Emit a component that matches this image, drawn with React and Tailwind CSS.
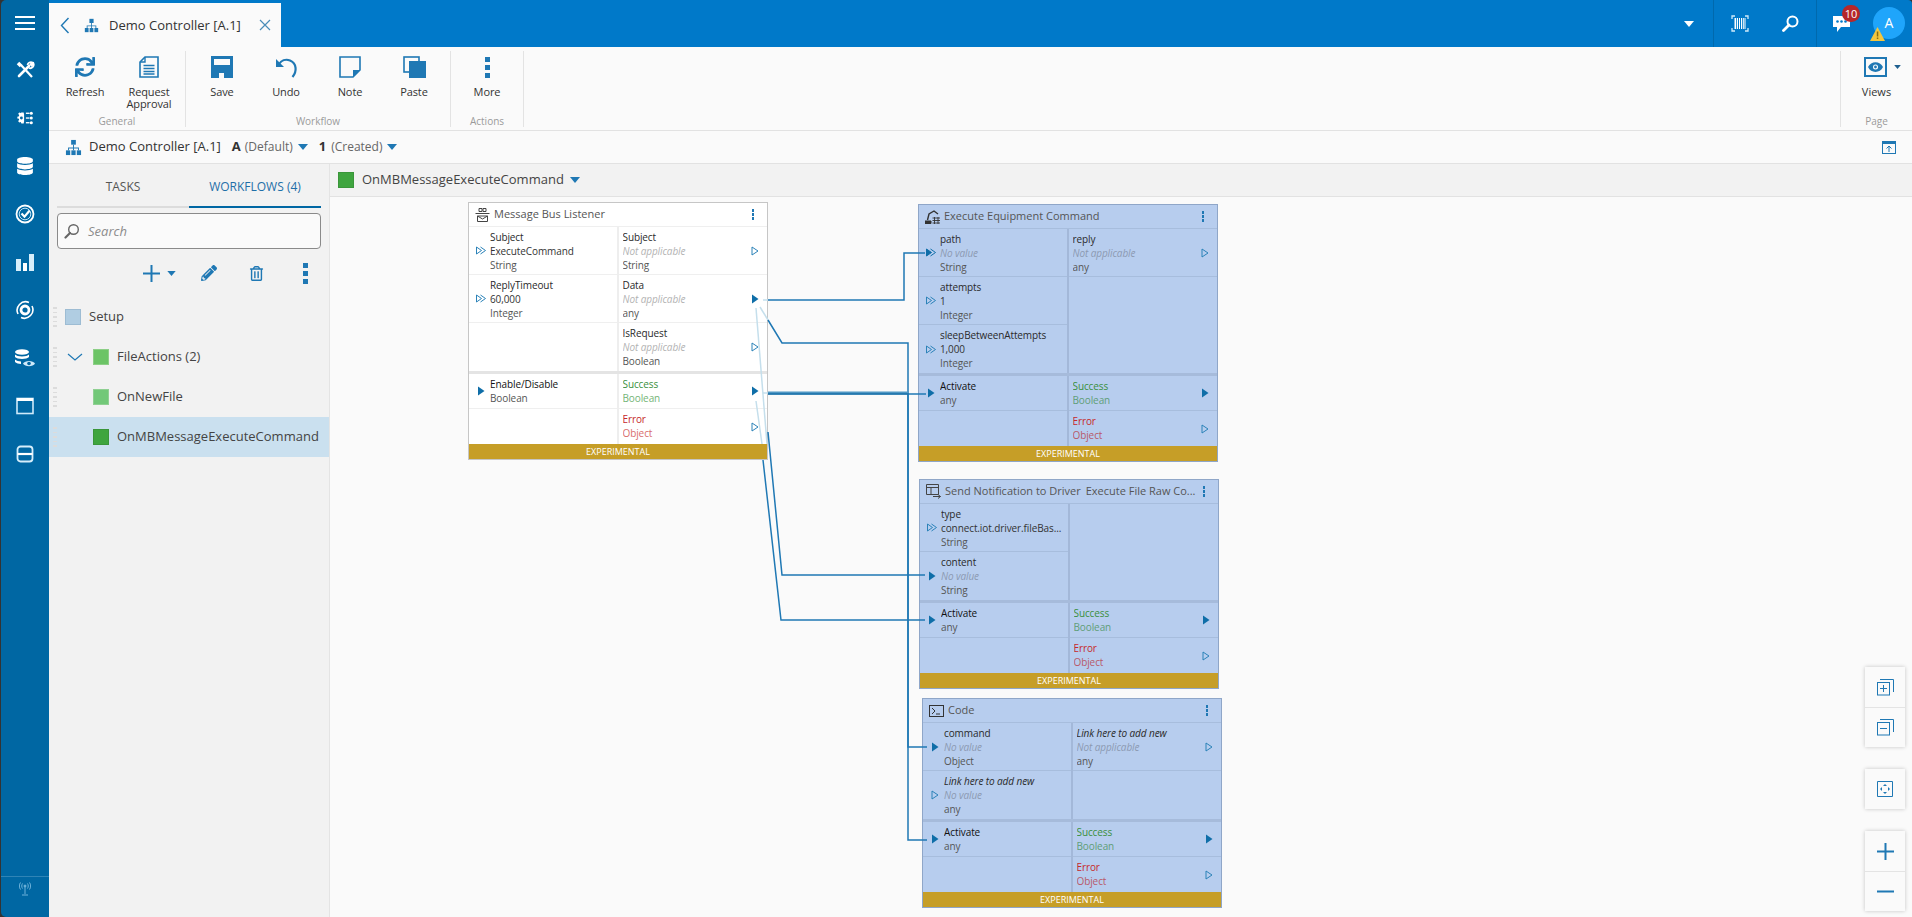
import React from "react";
import { FaSync, FaDatabase, FaPencilAlt, FaRegTrashAlt } from "react-icons/fa";

const Org = ({ c = "#1f78b4", s = 18 }) => (
  <svg width={s} height={s} viewBox="0 0 18 18" fill={c}>
    <rect x="6.5" y="1" width="5" height="5" />
    <rect x="1" y="12" width="4.5" height="5" />
    <rect x="6.75" y="12" width="4.5" height="5" />
    <rect x="12.5" y="12" width="4.5" height="5" />
    <path d="M8.5 6h1v3h5.250v3h-1v-2h-4.250v2h-1v-2h-4.250v2h-1v-3h5.250z" />
  </svg>
);
const Caret = ({ c = "#1f78b4", w = 11, h = 6 }) => (
  <svg width={w} height={h} viewBox="0 0 10 6" fill={c}><path d="M0 0h10L5 6z" /></svg>
);
const Kebab = ({ s = 4, g = 3, c = "#1f78b4" }) => (
  <div className="flex flex-col" style={{ gap: g }}>
    {[0, 1, 2].map((i) => <div key={i} style={{ width: s, height: s, background: c }} />)}
  </div>
);

const railIcons = [
  <svg key="a" width="20" height="20" viewBox="0 0 20 20" fill="none" stroke="#fff" strokeWidth="2.200"><path d="M6 5 17 17" /><path d="M3 3 6 6" strokeWidth="3.500" /><path d="M4 16 14 6" strokeWidth="2.600" strokeLinecap="round" /><path d="M12.500 5a3.500 3.500 0 0 1 5-2.500l-2 2 1 1 2-2a3.500 3.500 0 0 1-4.500 4.500" strokeWidth="1.800" /></svg>,
  <svg key="b" width="18" height="18" viewBox="0 0 20 20" fill="#fff"><path d="M6 4h2.500l.5 2v8l-.5 2H6l-.7-1.600-1.600.6-1.300-1.500 1-1.500v-1.300L1.500 10.500v-2L3.400 8V6.800L2.400 5.300 3.700 3.800l1.600.6z" /><circle cx="6" cy="10" r="1.600" fill="#0067a3" /><rect x="11" y="4" width="4" height="1.500" /><rect x="11" y="9.300" width="4" height="1.500" /><rect x="11" y="14.500" width="4" height="1.500" /><circle cx="17" cy="4.700" r="1.700" /><circle cx="17" cy="10" r="1.700" /><circle cx="17" cy="15.300" r="1.700" /></svg>,
  <FaDatabase key="c" size={18} color="#fff" />,
  <svg key="d" width="20" height="20" viewBox="0 0 20 20" fill="none" stroke="#fff"><circle cx="10" cy="10" r="8.500" strokeWidth="1.800" /><circle cx="10" cy="10" r="5.800" strokeWidth="1" stroke="#bfe3f7" /><path d="m6.500 9.500 3 3.200 5-6" strokeWidth="2.200" /></svg>,
  <svg key="e" width="20" height="20" viewBox="0 0 20 20" fill="#fff"><rect x="1" y="7" width="5" height="12" fill="#d6eefb" /><rect x="8" y="11" width="4" height="8" /><rect x="14" y="2" width="5" height="17" fill="#d6eefb" /></svg>,
  <svg key="f" width="20" height="20" viewBox="0 0 20 20" fill="none" stroke="#fff"><path d="M3 14A8.500 8.500 0 0 1 14 2.500M17 6a8.500 8.500 0 0 1-11 11.500" strokeWidth="1.600" /><circle cx="10" cy="10" r="4" strokeWidth="2.800" /></svg>,
  <svg key="g" width="22" height="20" viewBox="0 0 22 20" fill="#fff"><ellipse cx="8" cy="4" rx="7" ry="2.800" /><path d="M1 6.500c2 2.500 12 2.500 14 0V9c-2 2.500-12 2.500-14 0z" /><path d="M1 11.500c1 1.200 4 2 6 2v2.500c-2 0-5-.8-6-2z" /><path d="M9 15.500c2-3.500 10-3.500 12 0-2 3.500-10 3.500-12 0z" fill="#cfeafa" /><circle cx="15" cy="15.500" r="1.800" fill="#0067a3" /></svg>,
  <svg key="h" width="20" height="20" viewBox="0 0 20 20" fill="none"><rect x="2" y="2.500" width="16" height="15" stroke="#cfeafa" strokeWidth="1.600" /><rect x="2" y="2" width="16" height="3" fill="#fff" /></svg>,
  <svg key="i" width="20" height="20" viewBox="0 0 20 20" fill="none" stroke="#d6eefb" strokeWidth="1.800"><rect x="2.500" y="2.500" width="15" height="15" rx="3" /><path d="M2.500 10h15" strokeWidth="2.200" stroke="#fff" /></svg>,
];

function Rail() {
  return (
    <div className="w-[48px] shrink-0 bg-[#0067a3] rounded-tl-[5px] rounded-bl-[5px] flex flex-col h-full">
      <div className="h-[46px] flex flex-col items-center justify-center gap-[4px]">
        <div className="w-[20px] h-[2px] bg-white" />
        <div className="w-[20px] h-[2px] bg-white" />
        <div className="w-[20px] h-[2px] bg-white" />
      </div>
      {railIcons.map((ic, i) => (
        <div key={i} className="h-[48px] flex items-center justify-center">{ic}</div>
      ))}
      <div className="mt-auto h-[41px] border-t border-[#2f84b6] flex justify-center pt-[5px]">
        <svg width="12" height="14" viewBox="0 0 12 14" fill="none" stroke="#6fb3da" strokeWidth="1">
          <path d="M6 4v8M3 13h6" /><circle cx="6" cy="4" r="1" fill="#6fb3da" />
          <path d="M3.500 1.500c-1 1.500-1 3.500 0 5M8.500 1.500c1 1.500 1 3.500 0 5M1.500 .5c-1.500 2-1.500 5 0 7M10.500 .5c1.500 2 1.500 5 0 7" />
        </svg>
      </div>
    </div>
  );
}

function TopBar() {
  return (
    <div className="h-[47px] bg-[#0079c9] flex items-end rounded-tr-[4px] relative">
      <div className="w-[232px] h-[44px] bg-[#fafafa] flex items-center relative">
        <svg className="ml-[11px]" width="10" height="17" viewBox="0 0 10 17" fill="none" stroke="#1f78b4" strokeWidth="1.400"><path d="M8.500 1 1.500 8.500l7 7.500" /></svg>
        <div className="ml-[14px]"><Org s={15} /></div>
        <span className="ml-[10px] text-[13px] text-[#333] leading-none whitespace-nowrap">Demo Controller [A.1]</span>
        <svg className="ml-[18px]" width="12" height="12" viewBox="0 0 12 12" fill="none" stroke="#4a8db8" strokeWidth="1.200"><path d="m1 1 10 10M11 1 1 11" /></svg>
      </div>
      <div className="ml-auto h-[47px] flex items-center">
        <div className="pr-[19px]"><Caret c="#fff" w={10} h={6} /></div>
        <div className="w-[52px] h-[47px] border-l border-[#0069ad] flex items-center justify-center pl-[1px]">
          <svg width="18" height="17" viewBox="0 0 18 17" fill="none">
            <path d="M1 4V1h3M14 1h3v3M17 13v3h-3M4 16H1v-3" stroke="#cfeafa" strokeWidth="1.300" />
            <path d="M3.500 3H5v11H3.500zM5.800 3h1.200v11H5.800zM8 3h1v11H8zM10 3h1.200v11H10zM12 3h.800v11H12zM13.500 3h1v11h-1z" fill="#fff" />
          </svg>
        </div>
        <div className="w-[51px] h-[47px] flex items-center justify-center">
          <svg width="17" height="17" viewBox="0 0 17 17" fill="none" stroke="#fff"><circle cx="10.500" cy="6.500" r="5" strokeWidth="2" /><path d="M7 10 1.500 15.500" strokeWidth="2.800" strokeLinecap="round" /></svg>
        </div>
        <div className="w-[96px] h-[47px] border-l border-[#0069ad] relative">
          <svg className="absolute left-[16px] top-[15px]" width="18" height="18" viewBox="0 0 18 18"><path d="M0 1h17v11H8l-4 5v-5H0z" fill="#fff" /><circle cx="4.500" cy="6.500" r="1.300" fill="#0079c9" /><circle cx="8.500" cy="6.500" r="1.300" fill="#0079c9" /><circle cx="12.500" cy="6.500" r="1.300" fill="#0079c9" /></svg>
          <div className="absolute left-[25px] top-[5px] w-[18px] h-[17px] rounded-full bg-[#b5272a] text-white text-[11px] leading-[17px] text-center">10</div>
          <div className="absolute left-[56px] top-[7px] w-[32px] h-[32px] rounded-full bg-[#1fa5fb] text-white text-[14px] leading-[32px] text-center">A</div>
          <svg className="absolute left-[53px] top-[27px]" width="15" height="14" viewBox="0 0 15 14"><path d="M7.500 0 15 14H0z" fill="#f3c63f" /><rect x="6.800" y="4.500" width="1.500" height="5" fill="#8a6d12" /><rect x="6.800" y="10.500" width="1.500" height="1.500" fill="#8a6d12" /></svg>
        </div>
      </div>
    </div>
  );
}

const rIcons = {
  refresh: <FaSync size={20} color="#1f78b4" />,
  doc: (
    <svg width="20" height="22" viewBox="0 0 20 22" fill="none" stroke="#1f78b4"><path d="M6 1h13v20H1V6z" strokeWidth="1.600" /><path d="M6 1v5H1" strokeWidth="1.400" /><path d="M4.500 9.500h11M4.500 12.500h11M4.500 15.500h11M4.500 18h11" strokeWidth="1.500" /></svg>
  ),
  save: (
    <svg width="22" height="22" viewBox="0 0 22 22"><path d="M0 0h22v22H0z" fill="#1f78b4" /><rect x="3" y="3" width="16" height="6" fill="#fafafa" /><rect x="8" y="17" width="5" height="5" fill="#fafafa" /></svg>
  ),
  undo: (
    <svg width="23" height="21" viewBox="0 0 23 21" fill="none" stroke="#1f78b4"><path d="M3 8.500C6 3 11 2 15 3.500c7 3 7 11 2.500 16.500" strokeWidth="2.200" /><path d="M1 2v8h8z" fill="#1f78b4" stroke="none" /></svg>
  ),
  note: (
    <svg width="22" height="22" viewBox="0 0 22 22" fill="none" stroke="#1f78b4"><path d="M1 1h20v13l-7 7H1z" strokeWidth="1.600" /><path d="M21 14h-7v7z" fill="#1f78b4" stroke="none" /></svg>
  ),
  paste: (
    <svg width="23" height="22" viewBox="0 0 23 22" fill="none"><rect x="1" y="1" width="15" height="15" stroke="#1f78b4" strokeWidth="1.600" /><rect x="6" y="5" width="17" height="17" fill="#1f78b4" /></svg>
  ),
  more: <Kebab s={5} g={3} />,
};

const RItem = ({ icon, label }) => (
  <div className="w-[64px] flex flex-col items-center">
    <div className="h-[22px] flex items-center justify-center">{rIcons[icon]}</div>
    <div className="mt-[8px] text-[11px] leading-[12px] text-[#333] text-center tracking-[-0.1px]">{label}</div>
  </div>
);
const RGroup = ({ title, items }) => (
  <div className="flex flex-col border-r border-[#e3e3e3] px-[4px] h-[76px]">
    <div className="flex flex-1 pt-[5px]">
      {items.map(([i, l]) => <RItem key={i} icon={i} label={l} />)}
    </div>
    <div className="text-[10px] leading-[12px] text-[#9a9a9a] text-center">{title}</div>
  </div>
);

function Ribbon() {
  return (
    <div className="h-[84px] bg-[#fafafa] border-b border-[#e2e2e2] flex pt-[4px]">
      <RGroup title="General" items={[["refresh", "Refresh"], ["doc", <>Request<br />Approval</>]]} />
      <RGroup title="Workflow" items={[["save", "Save"], ["undo", "Undo"], ["note", "Note"], ["paste", "Paste"]]} />
      <RGroup title="Actions" items={[["more", "More"]]} />
      <div className="ml-auto w-[72px] h-[76px] border-l border-[#e3e3e3] flex flex-col items-center">
        <div className="pt-[5px] h-[27px] flex items-center gap-[7px] pl-[12px]">
          <div className="w-[23px] h-[20px] border-[2.5px] border-[#1f78b4] flex items-center justify-center">
            <svg width="15" height="10" viewBox="0 0 15 10"><path d="M0 5c3-6.500 12-6.500 15 0-3 6.500-12 6.500-15 0z" fill="#1f78b4" /><circle cx="7.500" cy="5" r="2.500" fill="#fff" /><circle cx="7.500" cy="5" r="1.400" fill="#1f78b4" /></svg>
          </div>
          <Caret c="#1f5f8f" w={7} h={4} />
        </div>
        <div className="mt-[8px] text-[11px] leading-[12px] text-[#333]">Views</div>
        <div className="mt-auto text-[10px] leading-[12px] text-[#9a9a9a]">Page</div>
      </div>
    </div>
  );
}

function SubBar() {
  return (
    <div className="h-[33px] bg-[#fafafa] border-b border-[#e2e2e2] flex items-center pl-[16px] text-[13px] text-[#333] whitespace-nowrap">
      <Org s={17} />
      <span className="ml-[7px]">Demo Controller [A.1]</span>
      <span className="ml-[11px] font-bold">A</span>
      <span className="ml-[4px] text-[12px] text-[#666]">(Default)</span>
      <span className="ml-[5px]"><Caret w={10} h={6} /></span>
      <span className="ml-[11px] font-bold">1</span>
      <span className="ml-[5px] text-[12px] text-[#666]">(Created)</span>
      <span className="ml-[5px]"><Caret w={10} h={6} /></span>
      <div className="ml-auto mr-[16px]">
        <svg width="14" height="13" viewBox="0 0 14 13" fill="none"><rect x=".5" y=".5" width="13" height="12" stroke="#1f78b4" /><rect x="0" y="0" width="14" height="3" fill="#1f78b4" /><path d="M7 11V5M4.500 7.500 7 5l2.500 2.500" stroke="#1f78b4" /></svg>
      </div>
    </div>
  );
}

const Drag = () => (
  <div className="flex flex-col gap-[3px] w-[4px] mr-[4px]">
    {[0, 1, 2, 3, 4].map((i) => <div key={i} className="h-[1.500px] w-[4px] bg-[#dcdcdc]" />)}
  </div>
);

const Tree = ({ color, border, label, indent, chevron, selected }) => (
  <div className={`h-[40px] flex items-center pl-[4px] ${selected ? "bg-[#cae0ef]" : ""}`}>
    <Drag />
    {chevron && (
      <svg className="ml-[6px]" width="16" height="8" viewBox="0 0 16 8" fill="none" stroke="#1f78b4" strokeWidth="1.200"><path d="m1 1 7 6 7-6" /></svg>
    )}
    <div
      className={`w-[16px] h-[16px] shrink-0 border ${indent ? (chevron ? "ml-[10px]" : "ml-[32px]") : "ml-[4px]"}`}
      style={{ background: color, borderColor: border }}
    />
    <span className="ml-[8px] text-[13px] text-[#444] whitespace-nowrap">{label}</span>
  </div>
);

function LeftPanel() {
  return (
    <div className="w-[281px] shrink-0 bg-[#f2f2f2] border-r border-[#e4e4e4] flex flex-col">
      <div className="mx-[8px] h-[44px] flex border-b-0">
        <div className="w-[132px] pt-[3px] border-b-2 border-[#dcdcdc] flex items-center justify-center text-[12px] text-[#555]">TASKS</div>
        <div className="w-[132px] pt-[3px] border-b-2 border-[#0067a3] flex items-center justify-center text-[12px] text-[#1f6fa8] whitespace-nowrap">WORKFLOWS (4)</div>
      </div>
      <div className="mx-[8px] mt-[5px] h-[36px] border border-[#8a8a8a] rounded-[4px] bg-[#fafafa] flex items-center pl-[6px]">
        <svg width="16" height="16" viewBox="0 0 16 16" fill="none" stroke="#666"><circle cx="9.500" cy="6.500" r="4.800" strokeWidth="1.400" /><path d="M6 10 1.500 14.500" strokeWidth="2.200" strokeLinecap="round" /></svg>
        <span className="ml-[8px] pt-[1px] text-[13px] italic text-[#8c8c8c]">Search</span>
      </div>
      <div className="h-[48px] flex items-center relative pl-[94px]">
        <svg width="17" height="17" viewBox="0 0 17 17" fill="#1f78b4"><rect x="7.500" y="0" width="2" height="17" /><rect x="0" y="7.500" width="17" height="2" /></svg>
        <span className="ml-[7px]"><Caret w={9} h={5} /></span>
        <span className="ml-[25px]"><FaPencilAlt size={16} color="#1f78b4" /></span>
        <span className="ml-[32px]"><FaRegTrashAlt size={15} color="#1f78b4" /></span>
        <span className="ml-[39px]"><Kebab s={5} g={3} /></span>
      </div>
      <Tree color="#b0cde2" border="#9dbcd3" label="Setup" />
      <Tree color="#6cc466" border="#8ccf86" label="FileActions (2)" indent chevron />
      <Tree color="#72c878" border="#8fd092" label="OnNewFile" indent />
      <Tree color="#3fa53f" border="#3a963a" label="OnMBMessageExecuteCommand" indent selected />
    </div>
  );
}

const Port = ({ kind }) => {
  const c = "#2b82b8";
  const d = "#0f6ea8";
  if (kind === "filled")
    return <svg width="8" height="10" viewBox="0 0 8 10"><path d="M1 .5 7.500 5 1 9.500z" fill={d} /></svg>;
  if (kind === "hollow")
    return <svg width="8" height="10" viewBox="0 0 8 10"><path d="M1 1 7 5 1 9z" fill="none" stroke={c} strokeWidth="1" /></svg>;
  if (kind === "double")
    return <svg width="10" height="9" viewBox="0 0 10 9" fill="none" stroke={c} strokeWidth="1"><path d="M.5 1 5.500 4.500 .5 8z" /><path d="M4.500 1 9.500 4.500 4.500 8" /></svg>;
  if (kind === "doubleFilled")
    return <svg width="10" height="9" viewBox="0 0 10 9" fill="none" stroke={d} strokeWidth="1"><path d="M.5 1 5.500 4.500 .5 8z" fill={d} /><path d="M4.500 1 9.500 4.500 4.500 8" /></svg>;
  return null;
};

const Cell = ({ side, h, blue, label, value, type, port, italicLabel, dark, tone, noValue }) => {
  const lineColor = blue ? "border-[#a7bddd]" : "border-[#efefef]";
  const labelC = tone === "ok" ? "text-[#3a8f3c]" : tone === "err" ? "text-[#c62a2a]" : dark ? "text-[#111]" : "text-[#2a2a2a]";
  const typeC = tone === "ok"
    ? blue ? "text-[#5f9e78]" : "text-[#74b577]"
    : tone === "err"
      ? blue ? "text-[#b8596a]" : "text-[#d96d6d]"
      : "text-[#555]";
  const text = (
    <div className="flex-1 min-w-0 pt-[3px] text-[10px] tracking-[-0.1px] leading-[14px] whitespace-nowrap overflow-hidden">
      {label && <div className={`${labelC} ${italicLabel ? "italic" : ""}`}>{label}</div>}
      {value && <div className={noValue ? `italic ${blue ? "text-[#8c9ab2]" : "text-[#b3b3b3]"}` : "text-[#333]"}>{value}</div>}
      {type && <div className={typeC}>{type}</div>}
    </div>
  );
  return (
    <div className={`flex border-b ${lineColor} last:border-b-0`} style={{ height: h }}>
      {side === "left" ? (
        <>
          <div className="w-[21px] pl-[3px] flex items-center justify-center shrink-0"><Port kind={port} /></div>
          {text}
        </>
      ) : (
        <>
          <div className="w-[4px]" />
          {text}
          <div className="w-[24px] flex items-center justify-center shrink-0"><Port kind={port} /></div>
        </>
      )}
    </div>
  );
};

const Column = ({ side, h, blue, rows, total }) => (
  <div className={`w-[149px] ${side === "left" ? `w-[150px] border-r-2 ${blue ? "border-[#a3b8d9]" : "border-[#eeeeee]"}` : ""}`}>
    {Array.from({ length: total }).map((_, i) => {
      const r = rows[i];
      return r
        ? <Cell key={i} side={side} h={h} blue={blue} {...r} />
        : <div key={i} style={{ height: h }} />;
    })}
  </div>
);

function Node({ x, y, icon, title, sub, blue, inL, inR, outL, outR, topN }) {
  return (
    <div
      className={`absolute w-[300px] border ${blue ? "bg-[#b7cdee] border-[#8fa6c8]" : "bg-white border-[#c6c6c6]"}`}
      style={{ left: x, top: y }}
    >
      <div className={`h-[24px] flex items-center pl-[6px] pr-[13px] border-b ${blue ? "border-[#a7bddd]" : "border-[#efefef]"}`}>
        <div className="w-[15px] flex justify-center">{icon}</div>
        <span className="ml-[4px] text-[11px] text-[#555] whitespace-nowrap">{title}</span>
        {sub && <span className="ml-[5px] text-[11px] text-[#555] whitespace-nowrap">{sub}</span>}
        <div className="ml-auto"><Kebab s={2.500} g={1.500} /></div>
      </div>
      <div className="flex">
        <Column side="left" h={48} blue={blue} rows={inL} total={topN} />
        <Column side="right" h={48} blue={blue} rows={inR} total={topN} />
      </div>
      <div className={`h-[3px] ${blue ? "bg-[#a6bbdb]" : "bg-[#e4e4e4]"}`} />
      <div className="flex">
        <Column side="left" h={35} blue={blue} rows={outL} total={2} />
        <Column side="right" h={35} blue={blue} rows={outR} total={2} />
      </div>
      <div className="h-[15px] bg-[#c69e27] text-white text-[9px] leading-[15px] text-center">EXPERIMENTAL</div>
    </div>
  );
}

const success = { label: "Success", type: "Boolean", tone: "ok", port: "filled" };
const error = { label: "Error", type: "Object", tone: "err", port: "hollow" };
const activate = { label: "Activate", type: "any", port: "filled", dark: true };
const NA = "Not applicable";

const IconBus = <svg width="15" height="14" viewBox="0 0 15 14" fill="none" stroke="#444"><path d="M4 .5h3v3H4zM8 .5h3v3H8zM.5 5.500h14M2.500 8h10v5.500h-10zM2.500 8l5 3 5-3" /></svg>;
const IconRobot = <svg width="15" height="14" viewBox="0 0 15 14" fill="none" stroke="#333"><path d="M0 11h6v2.500H0z" fill="#333" /><path d="M2.500 10 4 4l5-3 4 3" strokeWidth="1.400" /><path d="M7.500 8h7.500M7.500 10.500h7.500M7.500 13h7.500M9.500 7v7M13 7v7" strokeWidth=".9" /></svg>;
const IconNotify = <svg width="15" height="15" viewBox="0 0 15 15" fill="none" stroke="#444"><path d="M.5 .5h12v10H.5zM.5 3.500h12M5 3.500v7" /><path d="M7 12.500h7.500M12 10.500l2.500 2-2.500 2" /></svg>;
const IconCode = <svg width="15" height="12" viewBox="0 0 15 12" fill="none" stroke="#333"><rect x=".5" y=".5" width="14" height="11" /><path d="m3 3 3 3-3 3M7 9h4" /></svg>;

function Connectors() {
  const dark = "#1f78b4";
  const faint = "#c5dfec";
  return (
    <svg className="absolute inset-0 pointer-events-none" width="1582" height="720" viewBox="330 197 1582 720" fill="none">
      <g stroke={faint} strokeWidth="1.500">
        <path d="M763 300H768" />
        <path d="M760 307 768 320" />
        <path d="M756 308 767 444" />
        <path d="M756 401 762 444" />
        <path d="M763 393H768" />
      </g>
      <g stroke={dark} strokeWidth="1.500">
        <path d="M768 300H904V253H925" />
        <path d="M768 320 782 343H908V747H927" />
        <path d="M768 432 782 575H925" />
        <path d="M763 460 781 620H925" />
        <path d="M908 393V840H927" />
        <path d="M908 394H926" />
      </g>
      <path d="M768 393H908" stroke="#4f97c4" strokeWidth="3" />
      <path d="M768 394H908" stroke="#176fa9" strokeWidth="1.500" />
    </svg>
  );
}

const FloatBtn = ({ children, line }) => (
  <div className={`w-[40px] h-[40px] flex items-center justify-center ${line ? "border-t border-[#e4e4e4]" : ""}`}>{children}</div>
);

function Canvas() {
  return (
    <div className="relative flex-1 bg-[#fafafa] overflow-hidden">
      <Node x={138} y={5} topN={3} icon={IconBus} title="Message Bus Listener"
        inL={[
          { label: "Subject", value: "ExecuteCommand", type: "String", port: "double" },
          { label: "ReplyTimeout", value: "60,000", type: "Integer", port: "double" },
        ]}
        inR={[
          { label: "Subject", value: NA, noValue: true, type: "String", port: "hollow" },
          { label: "Data", value: NA, noValue: true, type: "any", port: "filled" },
          { label: "IsRequest", value: NA, noValue: true, type: "Boolean", port: "hollow" },
        ]}
        outL={[{ label: "Enable/Disable", type: "Boolean", port: "filled", dark: true }]}
        outR={[success, error]}
      />
      <Node blue x={588} y={7} topN={3} icon={IconRobot} title="Execute Equipment Command"
        inL={[
          { label: "path", value: "No value", noValue: true, type: "String", port: "doubleFilled" },
          { label: "attempts", value: "1", type: "Integer", port: "double" },
          { label: "sleepBetweenAttempts", value: "1,000", type: "Integer", port: "double" },
        ]}
        inR={[{ label: "reply", value: NA, noValue: true, type: "any", port: "hollow" }]}
        outL={[activate]} outR={[success, error]}
      />
      <Node blue x={589} y={282} topN={2} icon={IconNotify} title="Send Notification to Driver" sub="Execute File Raw Co..."
        inL={[
          { label: "type", value: "connect.iot.driver.fileBas...", type: "String", port: "double" },
          { label: "content", value: "No value", noValue: true, type: "String", port: "filled" },
        ]}
        inR={[]}
        outL={[activate]} outR={[success, error]}
      />
      <Node blue x={592} y={501} topN={2} icon={IconCode} title="Code"
        inL={[
          { label: "command", value: "No value", noValue: true, type: "Object", port: "filled" },
          { label: "Link here to add new", italicLabel: true, value: "No value", noValue: true, type: "any", port: "hollow" },
        ]}
        inR={[{ label: "Link here to add new", italicLabel: true, value: NA, noValue: true, type: "any", port: "hollow" }]}
        outL={[activate]} outR={[success, error]}
      />
      <Connectors />
      <div className="absolute right-[7px] bottom-[6px] flex flex-col gap-[22px]">
        <div className="bg-[#fafafa] shadow-[0_0_4px_rgba(0,0,0,0.22)]">
          <FloatBtn>
            <svg width="17" height="17" viewBox="0 0 17 17" fill="none" stroke="#1f78b4"><rect x=".5" y="3.500" width="12" height="12.500" /><path d="M3 .5h13.500V13" /><path d="M6.500 6v7M3 9.500h7" /></svg>
          </FloatBtn>
          <FloatBtn line>
            <svg width="17" height="17" viewBox="0 0 17 17" fill="none" stroke="#1f78b4"><rect x=".5" y="3.500" width="12" height="12.500" /><path d="M3 .5h13.500V13" /><path d="M3 9.500h7" /></svg>
          </FloatBtn>
        </div>
        <div className="bg-[#fafafa] shadow-[0_0_4px_rgba(0,0,0,0.22)]">
          <FloatBtn>
            <svg width="16" height="16" viewBox="0 0 16 16" fill="#1f78b4"><path d="M.5.5h15v15H.5z" fill="none" stroke="#1f78b4" /><path d="M8 3l2 2H6zM8 13l2-2H6zM3 8l2-2v4zM13 8l-2-2v4z" /></svg>
          </FloatBtn>
        </div>
        <div className="bg-[#fafafa] shadow-[0_0_4px_rgba(0,0,0,0.22)]">
          <FloatBtn>
            <svg width="17" height="17" viewBox="0 0 17 17" fill="#1f78b4"><rect x="7.500" y="0" width="2" height="17" /><rect x="0" y="7.500" width="17" height="2" /></svg>
          </FloatBtn>
          <FloatBtn line>
            <svg width="17" height="3" viewBox="0 0 17 3" fill="#1f78b4"><rect x="0" y=".5" width="17" height="2" /></svg>
          </FloatBtn>
        </div>
      </div>
    </div>
  );
}

export default function App() {
  return (
    <div className="w-[1912px] h-[917px] overflow-hidden flex bg-[#333333] pl-[1px] font-['Open_Sans',sans-serif]">
      <Rail />
      <div className="flex-1 min-w-0 flex flex-col">
        <TopBar />
        <Ribbon />
        <SubBar />
        <div className="flex-1 min-h-0 flex">
          <LeftPanel />
          <div className="flex-1 min-w-0 flex flex-col">
            <div className="h-[33px] bg-[#f2f2f2] border-b border-[#e2e2e2] flex items-center pl-[8px]">
              <div className="w-[16px] h-[16px] bg-[#3fa53f] border border-[#3a963a]" />
              <span className="ml-[8px] text-[13px] text-[#444]">OnMBMessageExecuteCommand</span>
              <span className="ml-[6px]"><Caret w={10} h={6} /></span>
            </div>
            <Canvas />
          </div>
        </div>
      </div>
    </div>
  );
}
